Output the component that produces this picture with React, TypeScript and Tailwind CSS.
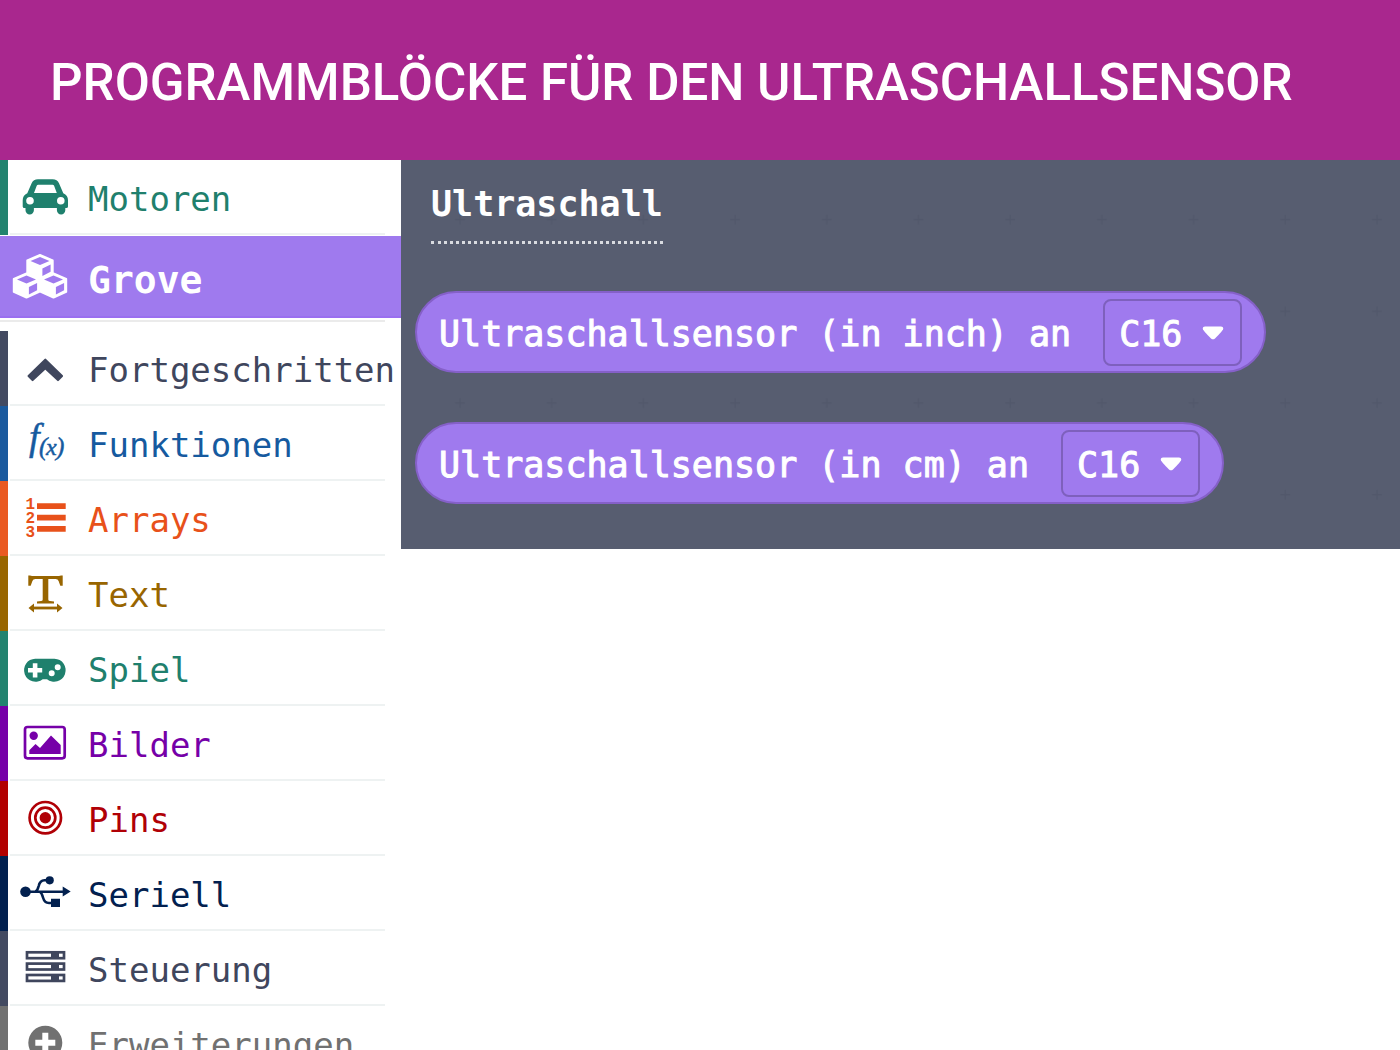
import { useState } from "react";
import type { ReactNode } from "react";
import { clsx } from "clsx";

type Category = {
  label: string;
  bar: string;
  text: string;
  icon: ReactNode;
};

const cubes = [
  [30, 32],
  [16.5, 50.5],
  [43.5, 50.5],
];

const groveIcon = (
  <>
    {cubes.map(([x, y]) => (
      <g key={x} transform={`translate(${x} ${y})`}>
        <path
          d="M0 -12 L12.7 -6.6 V6.4 L0 12 L-12.7 6.4 V-6.6 Z"
          stroke="currentColor"
          strokeWidth="2"
          strokeLinejoin="round"
        />
        <path
          d="M0 -10 L9.5 -6 L0 -2 L-9.5 -6 Z M2.4 1.4 L10.6 -2.4 V4.8 L2.4 8.9 Z"
          className="fill-[#9f7aee]"
        />
      </g>
    ))}
  </>
);

const motorCategory: Category = {
  label: "Motoren",
  bar: "bg-[#23836f]",
  text: "text-[#1f806d]",
  icon: (
    <path
      fillRule="evenodd"
      d="M17.3 33.3 L21.5 23.5 Q23.4 19.3 28 19.3 H42.6 Q47.2 19.3 49.1 23.5 L53.3 33.3 Q58 35.5 58 40.3 V46.4 Q58 48 56.3 48 H55.3 V50.3 A4.2 4.2 0 0 1 46.9 50.3 V48 H23.9 V50.3 A4.2 4.2 0 0 1 15.5 50.3 V48 H14.4 Q12.7 48 12.7 46.4 V40.3 Q12.7 35.5 17.3 33.3 Z M24 33 H46.8 L44.1 25.7 Q43.7 24.7 42.6 24.7 H28.2 Q27.1 24.7 26.7 25.7 Z M20 37 A3.8 3.8 0 1 0 20 44.6 A3.8 3.8 0 1 0 20 37 Z M50.8 37 A3.8 3.8 0 1 0 50.8 44.6 A3.8 3.8 0 1 0 50.8 37 Z"
    />
  ),
};

const advanced: Category[] = [
  {
    label: "Fortgeschritten",
    bar: "bg-[#434a61]",
    text: "text-[#3f465d]",
    icon: (
      <path
        d="M35.3 28.7 L52 45 L48 49 L35.3 37.2 L22.6 49 L18.6 45 Z"
        stroke="currentColor"
        strokeWidth="2.2"
        strokeLinejoin="round"
      />
    ),
  },
  {
    label: "Funktionen",
    bar: "bg-[#1b5a9e]",
    text: "text-[#165a9f]",
    icon: (
      <text
        x="19"
        y="44"
        fontSize="38"
        fontFamily="Liberation Serif, serif"
        fontStyle="italic"
        stroke="currentColor"
        strokeWidth="0.5"
      >
        f
        <tspan x="29" y="49" fontSize="25">(</tspan>
        <tspan x="36" fontSize="24">x</tspan>
        <tspan x="46" fontSize="25">)</tspan>
      </text>
    ),
  },
  {
    label: "Arrays",
    bar: "bg-[#ea5a22]",
    text: "text-[#e8511a]",
    icon: (
      <>
        <path d="M27 22.3 H55.7 V28 H27 Z M27 33.7 H55.7 V39.4 H27 Z M27 45 H55.7 V50.7 H27 Z" />
        <text fontFamily="Liberation Mono, monospace" fontWeight="700" fontSize="16">
          <tspan x="15.5" y="28">1</tspan>
          <tspan x="15.5" y="42">2</tspan>
          <tspan x="15.5" y="56">3</tspan>
        </text>
      </>
    ),
  },
  {
    label: "Text",
    bar: "bg-[#996600]",
    text: "text-[#986500]",
    icon: (
      <>
        <path d="M18.3 19.5 H20 L22 20 H49 L51 19.5 H52.7 V29.7 H50.3 L48.6 25 Q48 23 45.5 23 H38.3 V43.5 Q38.3 45 40 45 L44 45.6 V47.6 H27 V45.6 L31 45 Q32.7 45 32.7 43.5 V23 H25.5 Q23 23 22.4 25 L20.7 29.7 H18.3 Z" />
        <path d="M22 52 H49" fill="none" stroke="currentColor" strokeWidth="2.8" />
        <path d="M18.5 52 L24 47.5 V56.5 Z M52.5 52 L47 47.5 V56.5 Z" />
      </>
    ),
  },
  {
    label: "Spiel",
    bar: "bg-[#23836f]",
    text: "text-[#1f806d]",
    icon: (
      <path
        fillRule="evenodd"
        d="M25.2 27.7 H44.5 A11.5 11.5 0 1 1 37 48.2 H32.7 A11.5 11.5 0 1 1 25.2 27.7 Z M22.8 32.2 V37 H18 V41.6 H22.8 V46.4 H27.4 V41.6 H32.2 V37 H27.4 V32.2 Z M47.7 33.3 A3 3 0 1 0 47.7 39.3 A3 3 0 1 0 47.7 33.3 Z M41.7 39.3 A3 3 0 1 0 41.7 45.3 A3 3 0 1 0 41.7 39.3 Z"
      />
    ),
  },
  {
    label: "Bilder",
    bar: "bg-[#7600a8]",
    text: "text-[#7600a8]",
    icon: (
      <>
        <rect x="15" y="21" width="39.7" height="31.3" rx="2.5" fill="none" stroke="currentColor" strokeWidth="2.7" />
        <circle cx="23.7" cy="29.7" r="4.2" />
        <path d="M19.3 48 V44.3 L25.5 38 L30 42 L41 29.5 L50.7 39 V48 Z" />
      </>
    ),
  },
  {
    label: "Pins",
    bar: "bg-[#b20000]",
    text: "text-[#b00006]",
    icon: (
      <>
        <circle cx="35.3" cy="36.7" r="15.7" fill="none" stroke="currentColor" strokeWidth="2.7" />
        <circle cx="35.3" cy="36.7" r="10" fill="none" stroke="currentColor" strokeWidth="2.7" />
        <circle cx="35.3" cy="36.7" r="5.7" />
      </>
    ),
  },
  {
    label: "Seriell",
    bar: "bg-[#02204f]",
    text: "text-[#02204f]",
    icon: (
      <>
        <circle cx="15.5" cy="35.7" r="5.3" />
        <circle cx="39.7" cy="24.3" r="4.1" />
        <path d="M41 42.7 H50 V51 H41 Z M52.7 30.5 L60.7 35.5 L52.7 40.5 Z" />
        <path
          d="M15 35.7 H54 M25.5 35.7 Q27.5 34.5 28.7 30 Q30 24.3 34.5 24.3 H39 M30 35.7 Q31.8 37 33 41.5 Q34.5 47 39 47 H43"
          fill="none"
          stroke="currentColor"
          strokeWidth="2.6"
        />
      </>
    ),
  },
  {
    label: "Steuerung",
    bar: "bg-[#434a61]",
    text: "text-[#3f465d]",
    icon: (
      <>
        {[20, 31.3, 42.7].map((y) => (
          <g key={y} transform={`translate(0 ${y})`}>
            <rect x="17" y="1.3" width="37" height="5.9" fill="none" stroke="currentColor" strokeWidth="2.7" />
            <rect x="41" y="1" width="8" height="6" />
          </g>
        ))}
      </>
    ),
  },
  {
    label: "Erweiterungen",
    bar: "bg-[#717171]",
    text: "text-[#717171]",
    icon: (
      <path
        fillRule="evenodd"
        d="M35.3 19.7 A17 17 0 1 0 35.3 53.7 A17 17 0 1 0 35.3 19.7 Z M32.3 26.7 H38.3 V33.7 H45.3 V39.7 H38.3 V46.7 H32.3 V39.7 H25.3 V33.7 H32.3 Z"
      />
    ),
  },
];

function CategoryIcon({ children }: { children: ReactNode }) {
  return (
    <svg className="w-[70px] h-[75px] shrink-0" viewBox="0 0 70 75" fill="currentColor" aria-hidden="true">
      {children}
    </svg>
  );
}

function CategoryRow({ category }: { category: Category }) {
  return (
    <button type="button" className="flex w-full h-[75px] shrink-0 text-left">
      <span className={clsx("w-2 h-full shrink-0", category.bar)} />
      <span className={clsx("ml-0.5 mr-4 flex flex-1 min-w-0 border-b-2 border-[#eef2f2]", category.text)}>
        <CategoryIcon>{category.icon}</CategoryIcon>
        <span className="pl-2 pt-0.5 text-[34px] leading-[75px] whitespace-nowrap">{category.label}</span>
      </span>
    </button>
  );
}

function SensorBlock({ label }: { label: string }) {
  const [pin, setPin] = useState("C16");

  return (
    <label className="flex items-center gap-8 w-fit h-[82px] px-[22px] rounded-full border-2 border-[#8560c8] bg-[#9f7aee] text-white text-[35px] whitespace-nowrap">
      <span className="pt-1 [-webkit-text-stroke:1px_white]">{label}</span>
      <span className="relative">
        <select
          value={pin}
          onChange={(e) => setPin(e.target.value)}
          className="appearance-none block w-[139px] h-[67px] pl-[14px] pt-1 rounded-lg border-2 border-[#7e60bd] bg-transparent [-webkit-text-stroke:1px_white]"
        >
          <option>C16</option>
          <option>C17</option>
        </select>
        <svg
          className="absolute right-[18px] top-[27px] w-[22px] h-[14px] pointer-events-none"
          viewBox="0 0 22 14"
          fill="white"
          aria-hidden="true"
        >
          <path d="M3 0.5 H19 Q22 0.5 21 3.5 Q20 5.5 13 12.5 Q11 14.2 9 12.5 Q2 5.5 1 3.5 Q0 0.5 3 0.5 Z" />
        </svg>
      </span>
    </label>
  );
}

export default function App() {
  return (
    <div className="flex flex-col h-screen overflow-hidden bg-white font-['DejaVu_Sans_Mono',monospace]">
      <header className="flex items-center h-40 shrink-0 pl-[50px] bg-[#a9278e]">
        <h1 className="pt-1.5 font-['Roboto',sans-serif] font-medium text-[51px] leading-[60px] text-white whitespace-nowrap">
          PROGRAMMBLÖCKE FÜR DEN ULTRASCHALLSENSOR
        </h1>
      </header>

      <div className="flex flex-1 min-h-0 items-start">
        {/* Toolbox */}
        <nav className="w-[401px] h-full shrink-0 overflow-hidden">
          <CategoryRow category={motorCategory} />
          <button
            type="button"
            className="flex items-center w-full h-[82px] mt-px pl-2.5 bg-[#9f7aee] border-b-2 border-[#9a6ff0] text-white text-left"
          >
            <svg className="w-[70px] h-[82px] shrink-0" viewBox="0 0 70 82" fill="currentColor" aria-hidden="true">
              {groveIcon}
            </svg>
            <span className="pl-2 pt-2 text-[38px] font-bold">Grove</span>
          </button>
          <div className="h-[13px] mr-4 pt-0.5">
            <div className="h-0.5 bg-[#ebebeb]" />
          </div>
          {advanced.map((category) => (
            <CategoryRow key={category.label} category={category} />
          ))}
        </nav>

        {/* Flyout */}
        <main className="relative flex-1 min-w-0 pt-6 pb-[45px] bg-[#575d70]">
          <svg className="absolute inset-0 w-full h-full" aria-hidden="true">
            <defs>
              <pattern id="grid" width="91.7" height="91.7" patternUnits="userSpaceOnUse">
                <path d="M54 59.5 H64 M59 54.5 V64.5" stroke="#52586b" strokeWidth="1.5" />
              </pattern>
            </defs>
            <rect width="100%" height="100%" fill="url(#grid)" />
          </svg>
          <div className="relative">
            <h2 className="w-fit ml-[30px] pb-[17px] border-b-3 border-dotted border-[#d9dbe0] text-white text-[35px] leading-10 font-bold">
              Ultraschall
            </h2>
            <div className="flex flex-col gap-[49px] mt-[47px] ml-[14px]">
              <SensorBlock label="Ultraschallsensor (in inch) an" />
              <SensorBlock label="Ultraschallsensor (in cm) an" />
            </div>
          </div>
        </main>
      </div>
    </div>
  );
}
